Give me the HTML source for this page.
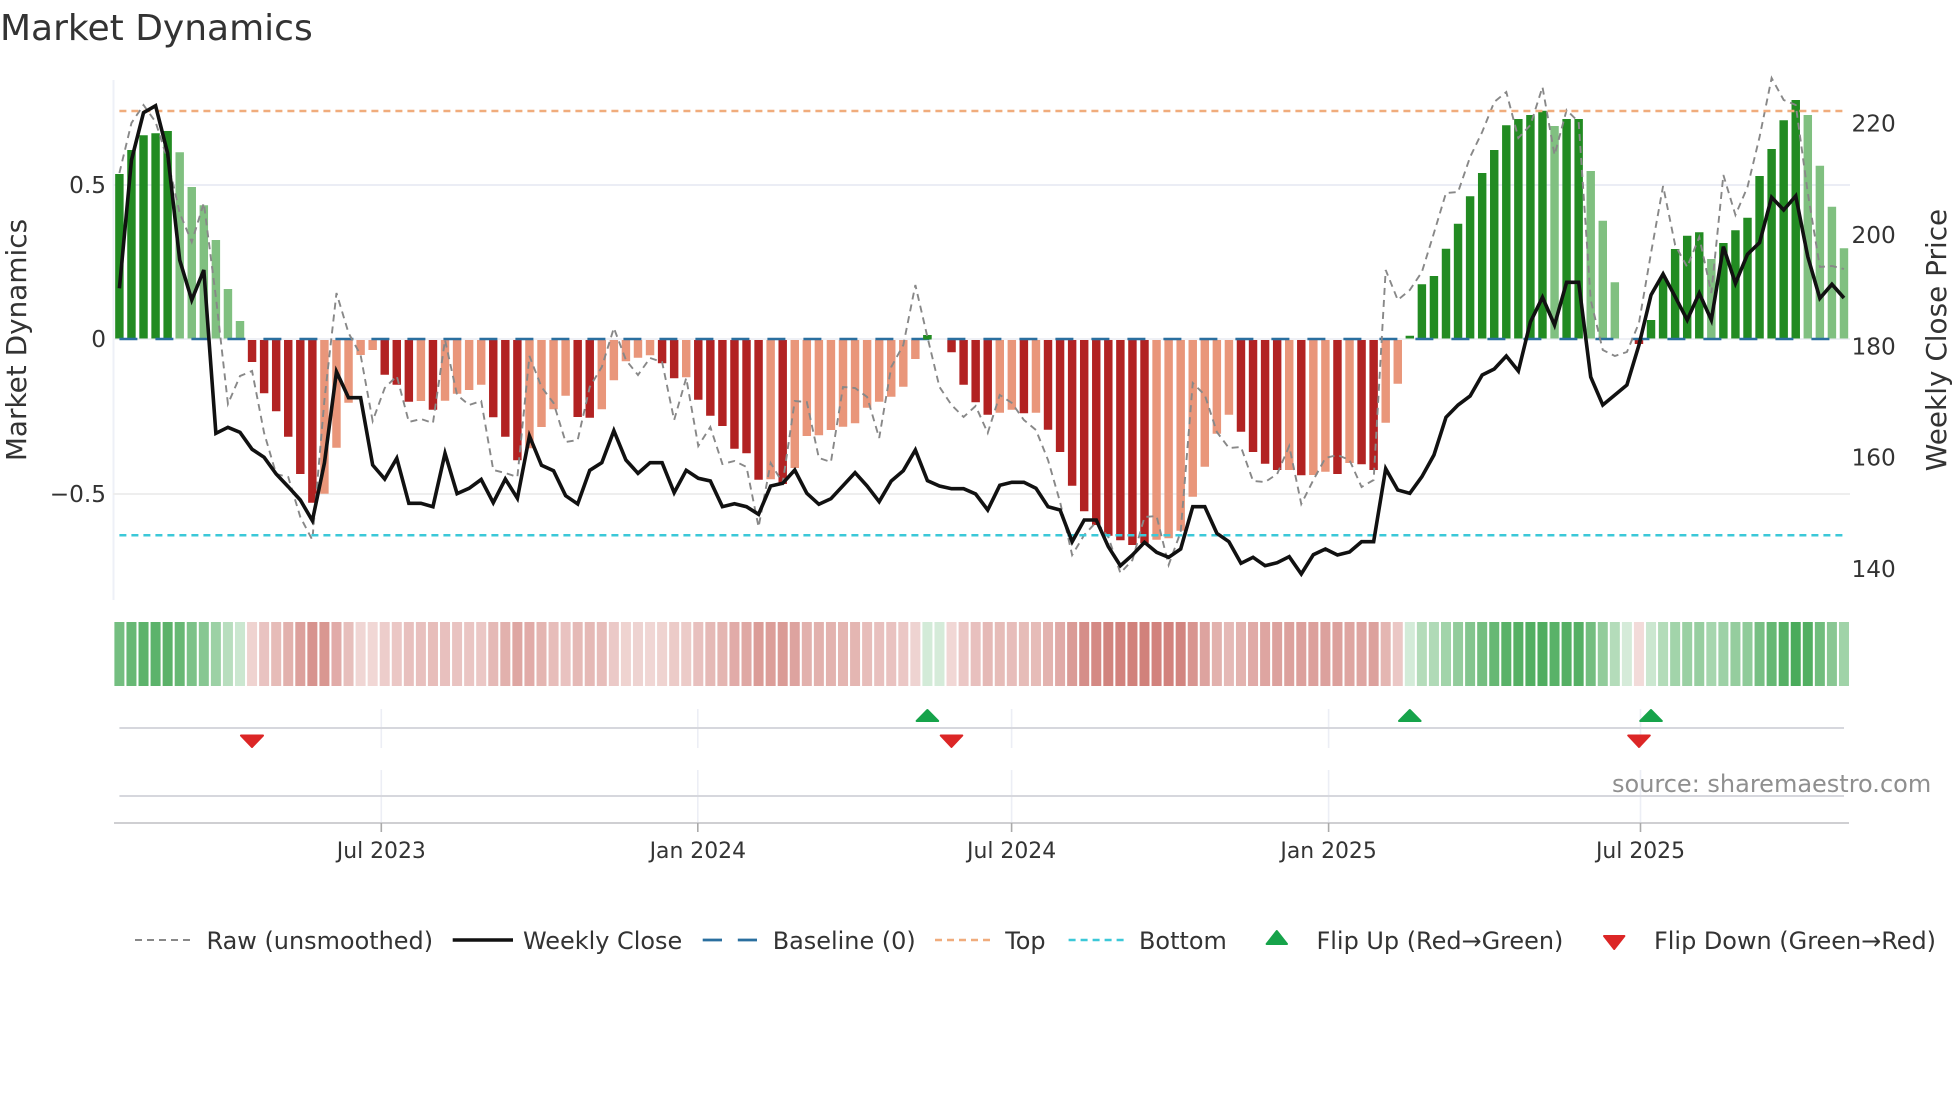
<!DOCTYPE html>
<html lang="en">
<head>
<meta charset="utf-8">
<title>Market Dynamics</title>
<style>
html,body{margin:0;padding:0;background:#fff;width:1960px;height:1102px;overflow:hidden}
svg{display:block}
text{font-family:"DejaVu Sans","Liberation Sans",sans-serif;fill:#333}
</style>
</head>
<body>
<svg width="1960" height="1102" viewBox="0 0 1960 1102" xmlns="http://www.w3.org/2000/svg">
<rect width="1960" height="1102" fill="#fff"/>
<text x="0" y="40" font-size="36">Market Dynamics</text>

<!-- grid -->
<g fill="none" stroke-width="2">
<path d="M113.5 80V600" stroke="#eef0f7"/>
<path d="M113 185H1850" stroke="#ebedf5"/>
<path d="M113 339H1850" stroke="#eef0f5"/>
<path d="M113 494H1850" stroke="#eeeeee"/>
</g>

<!-- bars + heat strip, x unit = one week -->
<g transform="translate(119.4 0) scale(12.06 1)" fill="none">
<g stroke-width=".7">
<path stroke="#228b22" d="M0 174V338.5M1 150V338.5M2 135.3V338.5M3 133.3V338.5M4 131V338.5M67 335V338.5M107 335.7V338.5M108 284.3V338.5M109 276V338.5M110 248.7V338.5M111 223.7V338.5M112 196.3V338.5M113 173V338.5M114 150V338.5M115 125.3V338.5M116 119V338.5M117 115V338.5M118 110.7V338.5M120 119V338.5M121 119V338.5M127 320V338.5M128 278V338.5M129 249V338.5M130 235.7V338.5M131 232.3V338.5M133 243V338.5M134 230.3V338.5M135 217.7V338.5M136 176V338.5M137 149V338.5M138 120.3V338.5M139 100V338.5"/>
<path stroke="#80c080" d="M5 152.3V338.5M6 187V338.5M7 205.3V338.5M8 240V338.5M9 289V338.5M10 321V338.5M119 126V338.5M122 171V338.5M123 220.7V338.5M124 282.3V338.5M132 259V338.5M140 115V338.5M141 165.7V338.5M142 206.7V338.5M143 248.3V338.5"/>
<path stroke="#b22222" d="M11 340V362M12 340V393.3M13 340V411.3M14 340V436.7M15 340V474M16 340V502.7M22 340V374.7M23 340V384.7M24 340V401.7M26 340V409.7M31 340V417.3M32 340V436.7M33 340V460.3M38 340V417M39 340V417.7M45 340V363.3M46 340V378.3M48 340V399.7M49 340V415.7M50 340V426M51 340V448.7M52 340V453.3M53 340V479.7M55 340V484M69 340V352.3M70 340V384.7M71 340V402.3M72 340V414.7M75 340V413.3M77 340V429.7M78 340V452M79 340V485.7M80 340V511.3M81 340V525M82 340V535.7M83 340V540.3M84 340V545M85 340V543.3M93 340V431.7M94 340V452M95 340V463.7M96 340V470M98 340V475.3M101 340V474M103 340V464.3M104 340V470M126 340V344"/>
<path stroke="#e9967a" d="M17 340V493.7M18 340V447.7M19 340V402.7M20 340V355M21 340V350M25 340V401M27 340V400.7M28 340V393.7M29 340V390M30 340V384.7M34 340V448.3M35 340V427M36 340V409.3M37 340V395.7M40 340V409.3M41 340V380.3M42 340V361.3M43 340V357.7M44 340V355.3M47 340V377.3M54 340V479.3M56 340V468M57 340V436M58 340V435.3M59 340V430M60 340V426.7M61 340V423.3M62 340V407.7M63 340V401.7M64 340V396.7M65 340V386.7M66 340V359M73 340V412.7M74 340V409.7M76 340V412.7M86 340V539.7M87 340V538.3M88 340V530.7M89 340V496.7M90 340V466.7M91 340V433.7M92 340V414.7M97 340V470M99 340V475M100 340V471.7M102 340V463M105 340V422.7M106 340V383.7"/>
</g>
<g stroke-width=".83" stroke="#1e9632" opacity=".92">
<path stroke-opacity=".67" d="M0 622V686"/><path stroke-opacity=".73" d="M1 622V686"/><path stroke-opacity=".78" d="M2 622V686"/><path stroke-opacity=".78" d="M3 622V686"/><path stroke-opacity=".79" d="M4 622V686"/><path stroke-opacity=".73" d="M5 622V686"/><path stroke-opacity=".63" d="M6 622V686"/><path stroke-opacity=".58" d="M7 622V686"/><path stroke-opacity=".48" d="M8 622V686"/><path stroke-opacity=".34" d="M9 622V686"/><path stroke-opacity=".25" d="M10 622V686"/>
<path stroke-opacity=".21" d="M67 622V686"/><path stroke-opacity=".2" d="M68 622V686"/>
<path stroke-opacity=".21" d="M107 622V686"/><path stroke-opacity=".36" d="M108 622V686"/><path stroke-opacity=".38" d="M109 622V686"/><path stroke-opacity=".45" d="M110 622V686"/><path stroke-opacity=".52" d="M111 622V686"/><path stroke-opacity=".6" d="M112 622V686"/><path stroke-opacity=".67" d="M113 622V686"/><path stroke-opacity=".73" d="M114 622V686"/><path stroke-opacity=".8" d="M115 622V686"/><path stroke-opacity=".82" d="M116 622V686"/><path stroke-opacity=".83" d="M117 622V686"/><path stroke-opacity=".84" d="M118 622V686"/><path stroke-opacity=".8" d="M119 622V686"/><path stroke-opacity=".82" d="M120 622V686"/><path stroke-opacity=".82" d="M121 622V686"/><path stroke-opacity=".67" d="M122 622V686"/><path stroke-opacity=".53" d="M123 622V686"/><path stroke-opacity=".36" d="M124 622V686"/><path stroke-opacity=".2" d="M125 622V686"/>
<path stroke-opacity=".25" d="M127 622V686"/><path stroke-opacity=".37" d="M128 622V686"/><path stroke-opacity=".45" d="M129 622V686"/><path stroke-opacity=".49" d="M130 622V686"/><path stroke-opacity=".5" d="M131 622V686"/><path stroke-opacity=".43" d="M132 622V686"/><path stroke-opacity=".47" d="M133 622V686"/><path stroke-opacity=".51" d="M134 622V686"/><path stroke-opacity=".54" d="M135 622V686"/><path stroke-opacity=".66" d="M136 622V686"/><path stroke-opacity=".74" d="M137 622V686"/><path stroke-opacity=".82" d="M138 622V686"/><path stroke-opacity=".87" d="M139 622V686"/><path stroke-opacity=".83" d="M140 622V686"/><path stroke-opacity=".69" d="M141 622V686"/><path stroke-opacity=".57" d="M142 622V686"/><path stroke-opacity=".46" d="M143 622V686"/>
</g>
<g stroke-width=".83" stroke="#b5352c" opacity=".86">
<path stroke-opacity=".26" d="M11 622V686"/><path stroke-opacity=".34" d="M12 622V686"/><path stroke-opacity=".39" d="M13 622V686"/><path stroke-opacity=".45" d="M14 622V686"/><path stroke-opacity=".55" d="M15 622V686"/><path stroke-opacity=".62" d="M16 622V686"/><path stroke-opacity=".6" d="M17 622V686"/><path stroke-opacity=".48" d="M18 622V686"/><path stroke-opacity=".37" d="M19 622V686"/><path stroke-opacity=".24" d="M20 622V686"/><path stroke-opacity=".23" d="M21 622V686"/><path stroke-opacity=".29" d="M22 622V686"/><path stroke-opacity=".32" d="M23 622V686"/><path stroke-opacity=".36" d="M24 622V686"/><path stroke-opacity=".36" d="M25 622V686"/><path stroke-opacity=".38" d="M26 622V686"/><path stroke-opacity=".36" d="M27 622V686"/><path stroke-opacity=".34" d="M28 622V686"/><path stroke-opacity=".33" d="M29 622V686"/><path stroke-opacity=".32" d="M30 622V686"/><path stroke-opacity=".4" d="M31 622V686"/><path stroke-opacity=".45" d="M32 622V686"/><path stroke-opacity=".51" d="M33 622V686"/><path stroke-opacity=".48" d="M34 622V686"/><path stroke-opacity=".43" d="M35 622V686"/><path stroke-opacity=".38" d="M36 622V686"/><path stroke-opacity=".35" d="M37 622V686"/><path stroke-opacity=".4" d="M38 622V686"/><path stroke-opacity=".4" d="M39 622V686"/><path stroke-opacity=".38" d="M40 622V686"/><path stroke-opacity=".31" d="M41 622V686"/><path stroke-opacity=".26" d="M42 622V686"/><path stroke-opacity=".25" d="M43 622V686"/><path stroke-opacity=".24" d="M44 622V686"/><path stroke-opacity=".26" d="M45 622V686"/><path stroke-opacity=".3" d="M46 622V686"/><path stroke-opacity=".3" d="M47 622V686"/><path stroke-opacity=".36" d="M48 622V686"/><path stroke-opacity=".4" d="M49 622V686"/><path stroke-opacity=".43" d="M50 622V686"/><path stroke-opacity=".48" d="M51 622V686"/><path stroke-opacity=".5" d="M52 622V686"/><path stroke-opacity=".57" d="M53 622V686"/><path stroke-opacity=".56" d="M54 622V686"/><path stroke-opacity=".58" d="M55 622V686"/><path stroke-opacity=".53" d="M56 622V686"/><path stroke-opacity=".45" d="M57 622V686"/><path stroke-opacity=".45" d="M58 622V686"/><path stroke-opacity=".44" d="M59 622V686"/><path stroke-opacity=".43" d="M60 622V686"/><path stroke-opacity=".42" d="M61 622V686"/><path stroke-opacity=".38" d="M62 622V686"/><path stroke-opacity=".36" d="M63 622V686"/><path stroke-opacity=".35" d="M64 622V686"/><path stroke-opacity=".32" d="M65 622V686"/><path stroke-opacity=".25" d="M66 622V686"/>
<path stroke-opacity=".23" d="M69 622V686"/><path stroke-opacity=".32" d="M70 622V686"/><path stroke-opacity=".36" d="M71 622V686"/><path stroke-opacity=".4" d="M72 622V686"/><path stroke-opacity=".39" d="M73 622V686"/><path stroke-opacity=".38" d="M74 622V686"/><path stroke-opacity=".39" d="M75 622V686"/><path stroke-opacity=".39" d="M76 622V686"/><path stroke-opacity=".44" d="M77 622V686"/><path stroke-opacity=".49" d="M78 622V686"/><path stroke-opacity=".58" d="M79 622V686"/><path stroke-opacity=".65" d="M80 622V686"/><path stroke-opacity=".68" d="M81 622V686"/><path stroke-opacity=".71" d="M82 622V686"/><path stroke-opacity=".72" d="M83 622V686"/><path stroke-opacity=".73" d="M84 622V686"/><path stroke-opacity=".73" d="M85 622V686"/><path stroke-opacity=".72" d="M86 622V686"/><path stroke-opacity=".72" d="M87 622V686"/><path stroke-opacity=".7" d="M88 622V686"/><path stroke-opacity=".61" d="M89 622V686"/><path stroke-opacity=".53" d="M90 622V686"/><path stroke-opacity=".45" d="M91 622V686"/><path stroke-opacity=".4" d="M92 622V686"/><path stroke-opacity=".44" d="M93 622V686"/><path stroke-opacity=".49" d="M94 622V686"/><path stroke-opacity=".52" d="M95 622V686"/><path stroke-opacity=".54" d="M96 622V686"/><path stroke-opacity=".54" d="M97 622V686"/><path stroke-opacity=".55" d="M98 622V686"/><path stroke-opacity=".55" d="M99 622V686"/><path stroke-opacity=".54" d="M100 622V686"/><path stroke-opacity=".55" d="M101 622V686"/><path stroke-opacity=".52" d="M102 622V686"/><path stroke-opacity=".52" d="M103 622V686"/><path stroke-opacity=".54" d="M104 622V686"/><path stroke-opacity=".42" d="M105 622V686"/><path stroke-opacity=".32" d="M106 622V686"/>
<path stroke-opacity=".21" d="M126 622V686"/>
</g>
</g>

<!-- baseline -->
<path d="M119.4 339H1844" stroke="#2a6f9f" stroke-width="2.6" stroke-dasharray="18 18" fill="none"/>
<path d="M923.2 335h8.4v4.5h-8.4z" fill="#228b22"/>

<!-- raw + top + bottom + close -->
<g transform="translate(119.4 0) scale(12.06 1)" fill="none">
<polyline vector-effect="non-scaling-stroke" stroke="#888" stroke-width="1.9" stroke-dasharray="7 5" points="0,173 1,123 2,105 3,122 4,160 5,213 6,242 7,203 8,297 9,404 10,376 11,371 12,433 13,474 14,477 15,517 16,540 17,400 18,293 19,333 20,355 21,421 22,388 23,376 24,422 25,419 26,423 27,340 28,395 29,405 30,401 31,470 32,473 33,477 34,356 35,387 36,403 37,442 38,440 39,387 40,367 41,328 42,360 43,375 44,358 45,362 46,420 47,378 48,446 49,427 50,464 51,461 52,467 53,527 54,463 55,483 56,401 57,402 58,458 59,462 60,387 61,388 62,397 63,438 64,367 65,345 66,285 67,337 68,387 69,405 70,417 71,406 72,433 73,395 74,403 75,420 76,430 77,460 78,502 79,555 80,535 81,522 82,537 83,573 84,560 85,517 86,516 87,565 88,532 89,383 90,395 91,432 92,448 93,447 94,481 95,482 96,474 97,446 98,504 99,480 100,458 101,455 102,460 103,487 104,480 105,270 106,300 107,290 108,272 109,233 110,193 111,192 112,157 113,132 114,102 115,92 116,138 117,125 118,87 119,155 120,110 121,122 122,300 123,350 124,356 125,352 126,323 127,253 128,186 129,245 130,267 131,237 132,293 133,175 134,215 135,187 136,137 137,78 138,100 139,105 140,193 141,267 142,266 143,269"/>
</g>
<path d="M119.4 111H1844" stroke="#f0ac7c" stroke-width="2.5" stroke-dasharray="7 5" fill="none"/>
<path d="M119.4 535.3H1844" stroke="#3cc8d8" stroke-width="2.5" stroke-dasharray="7 5" fill="none"/>
<g transform="translate(119.4 0) scale(12.06 1)" fill="none">
<polyline vector-effect="non-scaling-stroke" stroke="#111" stroke-width="3.6" stroke-linejoin="miter" points="0,288.3 1,160 2,112.7 3,105.7 4,153.3 5,260 6,300 7,270 8,433.3 9,427.3 10,432.3 11,449.3 12,457.3 13,474 14,486.7 15,500 16,520.7 17,463 18,371.7 19,397.7 20,397.7 21,465 22,479 23,458.3 24,503.3 25,503.3 26,506.7 27,453.3 28,493.7 29,488.3 30,479.5 31,502.7 32,479 33,498.3 34,436 35,465.3 36,470.7 37,495.7 38,504 39,470.3 40,462.7 41,430.7 42,460 43,473.3 44,462.7 45,462.7 46,492.7 47,470.3 48,478.3 49,481 50,506.7 51,503.7 52,506.7 53,514.3 54,486 55,483.3 56,470 57,493.3 58,504.3 59,498.7 60,485.7 61,472.7 62,486 63,501.7 64,481 65,470.7 66,450 67,480.7 68,486 69,488.7 70,488.7 71,494 72,510 73,485.3 74,482.3 75,482.3 76,488.3 77,506.7 78,510 79,541.7 80,520 81,520 82,546.7 83,565.7 84,555 85,542.3 86,552.3 87,557.3 88,549 89,506.7 90,506.7 91,533.3 92,541.7 93,563.3 94,557.3 95,565.7 96,562.7 97,556.7 98,574 99,554.7 100,549 101,555 102,552 103,541.7 104,541.7 105,468.7 106,490 107,493.3 108,476.7 109,455 110,417.3 111,405 112,396 113,375 114,369 115,356 116,371 117,322 118,297.3 119,325 120,282.3 121,282.3 122,377 123,405 124,395 125,385 126,345 127,295 128,274 129,296.7 130,320 131,293.3 132,320 133,246.7 134,283.3 135,254.3 136,242.7 137,197.3 138,210 139,196 140,256.7 141,298.3 142,284.3 143,298"/>
</g>

<!-- axis labels -->
<g font-size="23.2">
<text x="106" y="193" text-anchor="end">0.5</text>
<text x="106" y="347" text-anchor="end">0</text>
<text x="106" y="502" text-anchor="end">−0.5</text>
<text x="1851.5" y="131.5">220</text>
<text x="1851.5" y="243">200</text>
<text x="1851.5" y="354.5">180</text>
<text x="1851.5" y="465.5">160</text>
<text x="1851.5" y="577">140</text>
</g>
<text transform="translate(26 340) rotate(-90)" font-size="27.9" text-anchor="middle">Market Dynamics</text>
<text transform="translate(1946 340) rotate(-90)" font-size="27.9" text-anchor="middle">Weekly Close Price</text>

<!-- flip rows -->
<g fill="none" stroke="#eceef5" stroke-width="1.6">
<path d="M381.3 709V748M697.8 709V748M1011.6 709V748M1328.6 709V748M1640.5 709V748"/>
<path d="M381.3 770V822M697.8 770V822M1011.6 770V822M1328.6 770V822M1640.5 770V822"/>
</g>
<path d="M119.4 728H1844M119.4 796H1844" stroke="#d6d7dd" stroke-width="2" fill="none"/>
<path d="M114 823H1849" stroke="#cfcfd2" stroke-width="2" fill="none"/>
<path d="M381.3 823V832M697.8 823V832M1011.6 823V832M1328.6 823V832M1640.5 823V832" stroke="#aaa" stroke-width="1.6" fill="none"/>

<g fill="#16a34a" stroke="#16a34a" stroke-width="2" stroke-linejoin="round">
<path d="M927.4 710L938.2 721H916.6Z"/>
<path d="M1409.8 710L1420.6 721H1399Z"/>
<path d="M1651 710L1661.8 721H1640.2Z"/>
</g>
<g fill="#dc2626" stroke="#dc2626" stroke-width="2" stroke-linejoin="round">
<path d="M252 747L241 735.5H263Z"/>
<path d="M951.5 747L940.7 735.5H962.3Z"/>
<path d="M1639 747L1628.2 735.5H1649.8Z"/>
</g>

<text x="1612" y="792" font-size="24" style="fill:#8f8f8f">source: sharemaestro.com</text>

<g font-size="21.9" text-anchor="middle">
<text x="381.3" y="858">Jul 2023</text>
<text x="697.8" y="858">Jan 2024</text>
<text x="1011.6" y="858">Jul 2024</text>
<text x="1328.6" y="858">Jan 2025</text>
<text x="1640.5" y="858">Jul 2025</text>
</g>

<!-- legend -->
<path d="M135 940H191" stroke="#888" stroke-width="2" stroke-dasharray="7 5" fill="none"/>
<path d="M452.7 940H513" stroke="#111" stroke-width="3.6" fill="none"/>
<path d="M702.7 940H722M737.8 940H757" stroke="#2a6f9f" stroke-width="2.8" fill="none"/>
<path d="M935 940H992" stroke="#f0ac7c" stroke-width="2.5" stroke-dasharray="7 5" fill="none"/>
<path d="M1068.6 940H1124.3" stroke="#3cc8d8" stroke-width="2.5" stroke-dasharray="7 5" fill="none"/>
<path d="M1276.8 931L1287 944H1266.6Z" fill="#16a34a" stroke="#16a34a" stroke-width="2" stroke-linejoin="round"/>
<path d="M1614.2 949L1604 936H1624.4Z" fill="#dc2626" stroke="#dc2626" stroke-width="2" stroke-linejoin="round"/>
<g font-size="23.95">
<text x="206.5" y="949">Raw (unsmoothed)</text>
<text x="523" y="949">Weekly Close</text>
<text x="772.7" y="949">Baseline (0)</text>
<text x="1005.2" y="949">Top</text>
<text x="1139" y="949">Bottom</text>
<text x="1316.5" y="949">Flip Up (Red→Green)</text>
<text x="1654" y="949">Flip Down (Green→Red)</text>
</g>
</svg>
</body>
</html>
